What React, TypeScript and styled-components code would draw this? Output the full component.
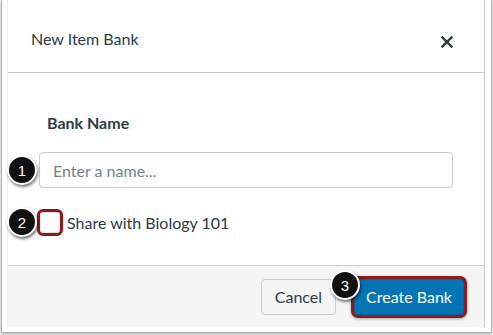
import React from "react";
import styled, { createGlobalStyle } from "styled-components";

const Global = createGlobalStyle`
  html, body { margin: 0; padding: 0; background: #ffffff; }
  body { font-family: Lato, "Liberation Sans", sans-serif; }
  * { box-sizing: border-box; }
`;

const Screen = styled.div`
  position: relative;
  width: 493px;
  height: 335px;
  background: #ffffff;
  overflow: hidden;
`;

const Shot = styled.div`
  margin-left: 1px;
  width: 491px;
  height: 333px;
  border: 1px solid #b3b3b3;
  border-top: none;
  box-shadow: 0 1px 3px rgba(0, 0, 0, 0.35);
  padding: 0 6px 5px 5px;
  background: #ffffff;
`;

const Modal = styled.div`
  height: 327px;
  display: flex;
  flex-direction: column;
  border-left: 1px solid #eceff1;
  border-right: 1px solid #c7cdd1;
  background: #ffffff;
`;

const Header = styled.div`
  height: 73px;
  flex: none;
  display: flex;
  align-items: flex-start;
  justify-content: space-between;
  padding: 29px 31px 0 23px;
  border-bottom: 1px solid #c7cdd1;
`;

const Title = styled.h2`
  margin: 0;
  font-size: 16px;
  line-height: 20px;
  font-weight: 400;
  color: #2d3b45;
`;

const Close = styled.button`
  width: 12px;
  height: 12px;
  margin-top: 7px;
  padding: 0;
  border: none;
  background: none;
  display: flex;
`;

const Body = styled.div`
  flex: 1;
  display: flex;
  flex-direction: column;
  padding: 40px 31px 0 31px;
`;

const Label = styled.label`
  margin-left: 8px;
  font-size: 16px;
  line-height: 20px;
  font-weight: 700;
  color: #2d3b45;
`;

const Input = styled.input`
  margin-top: 19px;
  width: 414px;
  height: 36px;
  border: 1px solid #c7cdd1;
  border-radius: 4px;
  padding: 0 13px;
  font-family: Lato, "Liberation Sans", sans-serif;
  font-size: 16px;
  color: #2d3b45;
  outline: none;
  &::placeholder { color: #73818c; }
`;

const CheckRow = styled.div`
  margin-top: 20px;
  margin-left: -2px;
  display: flex;
  align-items: center;
  gap: 4px;
  height: 29px;
`;

const CheckBox = styled.span`
  width: 26px;
  height: 27px;
  border: 3px solid #8c1b20;
  border-radius: 6px;
  background: #ffffff;
  box-shadow: inset 0 0 0 1px #e4e7ea;
`;

const CheckText = styled.span`
  font-size: 16px;
  line-height: 20px;
  color: #2d3b45;
`;

const Footer = styled.div`
  height: 62px;
  flex: none;
  display: flex;
  align-items: center;
  justify-content: flex-end;
  gap: 18px;
  padding: 0 20px 0 0;
  background: #f5f5f5;
  border-top: 1px solid #c7cdd1;
`;

const Button = styled.button<{ $primary?: boolean }>`
  height: 36px;
  padding: 0 ${(p) => (p.$primary ? "11px" : "13px")};
  margin-top: 1px;
  border-radius: 4px;
  font-family: Lato, "Liberation Sans", sans-serif;
  font-size: 16px;
  line-height: 20px;
  border: 1px solid ${(p) => (p.$primary ? "#0765a0" : "#c7cdd1")};
  background: ${(p) => (p.$primary ? "#0374b5" : "#f5f5f5")};
  color: ${(p) => (p.$primary ? "#ffffff" : "#2d3b45")};
  box-shadow: ${(p) =>
    p.$primary ? "0 0 0 3px #8c1b20, 0 1px 3px 3px rgba(0,0,0,0.35)" : "none"};
`;

const Badge = styled.div<{ $x: number; $y: number }>`
  position: absolute;
  left: ${(p) => p.$x}px;
  top: ${(p) => p.$y}px;
  width: 30px;
  height: 30px;
  border-radius: 50%;
  background: #111111;
  border: 2px solid #ffffff;
  box-shadow: 1px 2px 3px rgba(0, 0, 0, 0.55);
  color: #ffffff;
  font-family: "Liberation Sans", Arial, sans-serif;
  font-size: 15px;
  display: flex;
  align-items: center;
  justify-content: center;
`;

export default function App() {
  return (
    <>
      <Global />
      <Screen>
        <Shot>
          <Modal>
            <Header>
              <Title>New Item Bank</Title>
              <Close aria-label="Close">
                <svg width="12" height="12" viewBox="0 0 12 12">
                  <path
                    d="M1.5 1.5 L10.5 10.5 M10.5 1.5 L1.5 10.5"
                    stroke="#2d3b45"
                    strokeWidth="2.4"
                    strokeLinecap="square"
                  />
                </svg>
              </Close>
            </Header>
            <Body>
              <Label>Bank Name</Label>
              <Input placeholder="Enter a name..." />
              <CheckRow>
                <CheckBox />
                <CheckText>Share with Biology 101</CheckText>
              </CheckRow>
            </Body>
            <Footer>
              <Button>Cancel</Button>
              <Button $primary>Create Bank</Button>
            </Footer>
          </Modal>
        </Shot>
        <Badge $x={7} $y={155}>1</Badge>
        <Badge $x={7} $y={207}>2</Badge>
        <Badge $x={330} $y={270}>3</Badge>
      </Screen>
    </>
  );
}
